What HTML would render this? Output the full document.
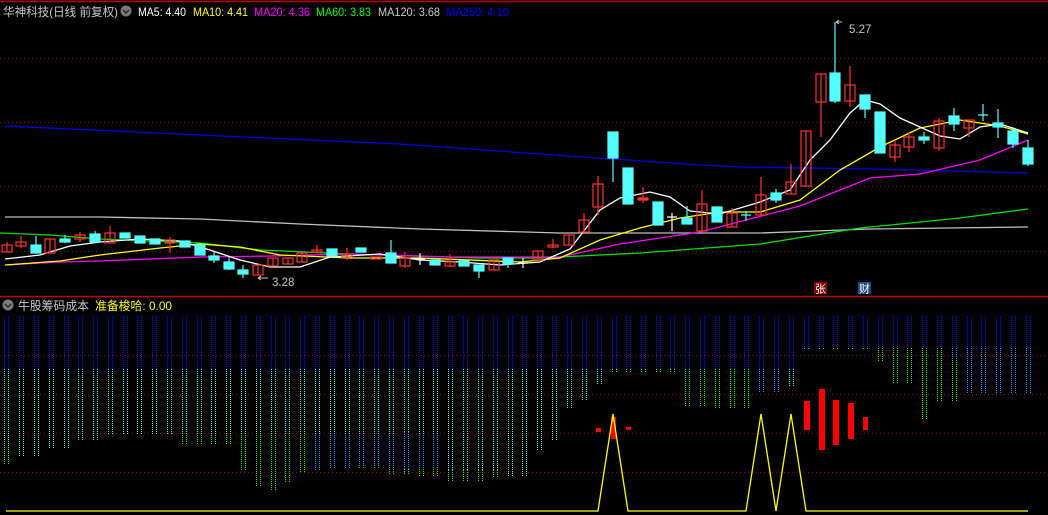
<!DOCTYPE html>
<html><head><meta charset="utf-8"><style>
html,body{margin:0;padding:0;background:#000;width:1048px;height:515px;overflow:hidden}
svg{display:block}
text{font-family:"Liberation Sans","Noto Sans CJK SC",sans-serif}
</style></head><body>
<svg width="1048" height="515" viewBox="0 0 1048 515" xmlns="http://www.w3.org/2000/svg">
<rect width="1048" height="515" fill="#000"/>
<line x1="0" y1="1.5" x2="1048" y2="1.5" stroke="#c00000" stroke-width="1.5"/>
<g stroke="#9a0000" stroke-dasharray="1 3" stroke-width="1" shape-rendering="crispEdges">
<line x1="0" y1="58.5" x2="1048" y2="58.5"/><line x1="0" y1="122.5" x2="1048" y2="122.5"/>
<line x1="0" y1="186.5" x2="1048" y2="186.5"/><line x1="0" y1="251.5" x2="1048" y2="251.5"/>
<line x1="0" y1="355.5" x2="1048" y2="355.5"/><line x1="0" y1="394.5" x2="1048" y2="394.5"/>
<line x1="0" y1="433.5" x2="1048" y2="433.5"/><line x1="0" y1="472.5" x2="1048" y2="472.5"/>
</g>
<line x1="0" y1="296.5" x2="1048" y2="296.5" stroke="#c00000" stroke-width="1.5"/>

<text x="3" y="16" font-size="12" fill="#c8c8c8" textLength="115" lengthAdjust="spacingAndGlyphs">华神科技(日线 前复权)</text>
<circle cx="126" cy="11" r="5.5" fill="#7a7a7a"/><path d="M123 10l3 3 3-3" stroke="#222" stroke-width="1.3" fill="none"/>
<text x="138" y="16" font-size="12" fill="#fff" textLength="48" lengthAdjust="spacingAndGlyphs">MA5: 4.40</text>
<text x="193" y="16" font-size="12" fill="#ffff00" textLength="55" lengthAdjust="spacingAndGlyphs">MA10: 4.41</text>
<text x="254" y="16" font-size="12" fill="#ff00ff" textLength="56" lengthAdjust="spacingAndGlyphs">MA20: 4.36</text>
<text x="316" y="16" font-size="12" fill="#00ff00" textLength="55" lengthAdjust="spacingAndGlyphs">MA60: 3.83</text>
<text x="378" y="16" font-size="12" fill="#c8c8c8" textLength="62" lengthAdjust="spacingAndGlyphs">MA120: 3.68</text>
<text x="446" y="16" font-size="12" fill="#0000ff" textLength="63" lengthAdjust="spacingAndGlyphs">MA250: 4.10</text>

<g fill="none" stroke-width="1.3">
<polyline stroke="#0000e0" points="5,126 200,135 400,144 540,154 700,165 740,167 873,169 1028,173"/>
<polyline stroke="#c0c0c0" points="5,217 100,217 200,219 300,224 420,229 560,233 760,233 870,229 1028,227"/>
<polyline stroke="#00e000" points="0,233 50,235 100,239 200,243 260,250 350,254 480,258 540,258 640,253 760,244 860,228 960,218 1028,209"/>
<polyline stroke="#ff00ff" points="5,265 60,262 100,261 200,257 270,256 350,254 450,257 560,257 620,244 700,232 800,206 870,178 920,174 980,160 1028,140"/>
<polyline stroke="#ffff00" points="5,265 60,261 100,255 160,248 200,244 240,247 280,255 350,258 420,258 520,262 560,258 600,240 640,228 680,218 720,212 760,212 800,200 840,170 880,147 920,128 960,120 1000,126 1028,134"/>
<polyline stroke="#ffffff" points="5,259 40,255 70,246 100,242 140,239 180,241 210,250 240,260 270,267 300,267 330,257 380,254 420,260 460,262 500,265 540,262 570,249 600,210 620,198 650,192 670,197 690,211 720,214 760,202 790,190 810,160 830,140 850,113 865,100 880,104 900,118 920,127 940,136 960,139 980,127 1000,124 1028,133"/>
</g>

<g stroke="#ff3232" fill="none" stroke-width="1.2">
<path d="M7 242V252M21 236V248M50 239V253M80 232V242M110 226V243M170 237V253M258 265V275M273 258V266M288 258V264M302 253V262M317 245V252M347 248V260M376 257V259M405 252V268M450 254V267M494 260V270M538 251V260M553 239V248M569 235V245M584 213V232M598 176V215M643 187V203M702 190V231M732 208V227M761 177V215M791 164V194M806 131V186M821 74V137M850 66V107M895 140V162M909 132V152M939 118V151M969 120V137"/>
<rect x="2" y="245" width="10" height="7"/><rect x="16" y="242" width="10" height="4"/><rect x="45" y="239" width="10" height="14"/>
<rect x="75" y="235" width="10" height="4"/><rect x="105" y="233" width="10" height="10"/><rect x="165" y="240" width="10" height="3"/>
<rect x="253" y="265" width="10" height="10"/><rect x="268" y="258" width="10" height="8"/><rect x="283" y="258" width="10" height="6"/>
<rect x="297" y="253" width="10" height="9"/><rect x="312" y="250" width="10" height="2"/><rect x="342" y="254" width="10" height="3"/>
<rect x="371" y="257" width="10" height="2"/><rect x="400" y="258" width="10" height="8"/><rect x="445" y="262" width="10" height="4"/>
<rect x="489" y="260" width="10" height="10"/><rect x="533" y="251" width="10" height="9"/><rect x="548" y="245" width="10" height="2"/>
<rect x="564" y="235" width="10" height="10"/><rect x="579" y="220" width="10" height="12"/><rect x="593" y="184" width="10" height="23"/>
<rect x="638" y="198" width="10" height="2" fill="#ff3232"/><rect x="697" y="204" width="10" height="27"/><rect x="727" y="213" width="10" height="14"/>
<rect x="756" y="195" width="10" height="20"/><rect x="786" y="182" width="10" height="12"/><rect x="801" y="131" width="10" height="55"/>
<rect x="816" y="74" width="10" height="28"/><rect x="845" y="85" width="10" height="16"/><rect x="890" y="145" width="10" height="12"/>
<rect x="904" y="137" width="10" height="10"/><rect x="934" y="121" width="10" height="27"/><rect x="964" y="120" width="10" height="8"/>
</g>
<g stroke="#54ffff" fill="#54ffff" stroke-width="1.2">
<path d="M36 236V254M65 235V243M95 231V242M214 252V263M229 257V270M243 265V278M391 240V263M479 265V278M508 258V268M613 132V182M687 206V224M776 189V203M835 22V103M865 95V118M924 132V144M954 108V131M998 109V138M1013 127V148M1028 140V166M746 211V221M983 104V121" fill="none"/>
<rect x="31" y="245" width="10" height="8"/><rect x="60" y="239" width="10" height="3"/><rect x="90" y="234" width="10" height="8"/>
<rect x="120" y="233" width="10" height="5"/><rect x="135" y="236" width="10" height="7"/><rect x="150" y="239" width="10" height="5"/>
<rect x="180" y="241" width="10" height="6"/><rect x="195" y="245" width="10" height="10"/><rect x="209" y="256" width="10" height="4"/>
<rect x="224" y="262" width="10" height="7"/><rect x="238" y="270" width="10" height="4"/><rect x="327" y="249" width="10" height="7"/>
<rect x="356" y="248" width="10" height="4"/><rect x="386" y="253" width="10" height="10"/><rect x="430" y="260" width="10" height="5"/>
<rect x="459" y="261" width="10" height="5"/><rect x="474" y="265" width="10" height="6"/><rect x="503" y="258" width="10" height="6"/>
<rect x="608" y="132" width="10" height="26"/><rect x="623" y="168" width="10" height="36"/><rect x="653" y="202" width="10" height="23"/>
<rect x="682" y="218" width="10" height="6"/><rect x="712" y="207" width="10" height="15"/><rect x="771" y="193" width="10" height="7"/>
<rect x="830" y="73" width="10" height="28"/><rect x="860" y="95" width="10" height="14"/><rect x="875" y="112" width="10" height="41"/>
<rect x="919" y="137" width="10" height="3"/><rect x="949" y="116" width="10" height="8"/><rect x="993" y="123" width="10" height="4"/>
<rect x="1008" y="131" width="10" height="13"/><rect x="1023" y="148" width="10" height="16"/>
<path d="M741 215H751M978 115H988" fill="none"/>
</g>
<g stroke="#fff" stroke-width="1.2" fill="none">
<path d="M415 259H425M420 253V265M667 217H677M672 213V231M518 263H528M523 258V268"/>
</g>

<path d="M836 22H842M836 22l3 -2M836 22l3 2" stroke="#c8c8c8" fill="none"/>
<text x="849" y="33" font-size="11.5" fill="#c8c8c8">5.27</text>
<path d="M258 278H268M258 278l3 -2M258 278l3 2" stroke="#c8c8c8" fill="none"/>
<text x="272" y="286" font-size="11.5" fill="#c8c8c8">3.28</text>

<rect x="814" y="282" width="13" height="12" fill="#8b0000"/>
<text x="820.5" y="292.5" font-size="11" fill="#fff" text-anchor="middle">张</text>
<rect x="858" y="282" width="13" height="12" fill="#1a4a8a"/>
<text x="864.5" y="292.5" font-size="11" fill="#fff" text-anchor="middle">财</text>

<circle cx="8" cy="305" r="5.5" fill="#7a7a7a"/><path d="M5 304l3 3 3-3" stroke="#222" stroke-width="1.3" fill="none"/>
<text x="18" y="310" font-size="12" fill="#c8c8c8" textLength="71" lengthAdjust="spacingAndGlyphs">牛股筹码成本</text>
<text x="95" y="310" font-size="12" fill="#ffff00" textLength="77" lengthAdjust="spacingAndGlyphs">准备梭哈: 0.00</text>

<g stroke-width="1" stroke-dasharray="1 1" fill="none" shape-rendering="crispEdges" transform="translate(0.5,0)">
<path stroke="#0010ff" d="M4 316V369M8 316V369M19 316V369M23 316V369M34 316V369M38 316V369M49 316V369M53 316V369M64 316V369M68 316V369M78 316V369M82 316V369M93 316V369M97 316V369M108 316V369M112 316V369M123 316V369M127 316V369M137 316V369M141 316V369M152 316V369M156 316V369M167 316V369M171 316V369M182 316V369M186 316V369M197 316V369M201 316V369M211 316V369M215 316V369M226 316V369M230 316V369M241 316V369M245 316V369M256 316V369M260 316V369M271 316V369M275 316V369M285 316V369M289 316V369M300 316V369M304 316V369M315 316V369M319 316V369M330 316V369M334 316V369M345 316V369M349 316V369M359 316V369M363 316V369M374 316V369M378 316V369M389 316V369M393 316V369M404 316V369M408 316V369M419 316V369M423 316V369M433 316V369M437 316V369M448 316V369M452 316V369M463 316V369M467 316V369M478 316V369M482 316V369M493 316V369M497 316V369M508 316V369M512 316V369M522 316V369M526 316V369M537 316V369M541 316V369M552 316V369M556 316V369M567 316V369M571 316V369M582 316V369M586 316V369M597 316V369M601 316V369M612 316V369M616 316V369M626 316V369M630 316V369M641 316V369M645 316V369M656 316V369M660 316V369M670 316V369M674 316V369M685 316V369M689 316V369M700 316V369M704 316V369M715 316V369M719 316V369M730 316V369M734 316V369M744 316V369M748 316V369M759 316V369M763 316V369M774 316V369M778 316V369M789 316V369M793 316V369M804 316V348M808 316V348M819 316V348M823 316V348M833 316V348M837 316V348M848 316V348M852 316V348M863 316V348M867 316V348M878 316V348M882 316V348M893 316V348M897 316V348M907 316V348M911 316V348M922 316V348M926 316V348M937 316V348M941 316V348M952 316V348M956 316V348M967 316V348M971 316V348M981 316V348M985 316V348M996 316V348M1000 316V348M1011 316V348M1015 316V348M1026 316V348M1030 316V348"/>
<path stroke="#40ffff" d="M4 369V462M8 369V462M19 369V457M23 369V457M34 369V457M38 369V457M49 369V449M53 369V449M64 369V449M68 369V449M78 369V440M82 369V440M93 369V440M97 369V440M108 369V435M112 369V435M123 369V435M127 369V435M137 369V435M141 369V435M152 369V435M156 369V435M167 369V435M171 369V435M182 369V435M186 369V435M197 369V435M201 369V435M211 369V435M215 369V435M226 369V435M230 369V435M241 369V435M245 369V435M256 369V435M260 369V435M271 369V435M275 369V435M285 369V435M289 369V435M300 369V435M304 369V435M315 369V435M319 369V435M330 369V435M334 369V435M345 369V435M349 369V435M359 369V435M363 369V435M374 369V435M378 369V435M389 369V435M393 369V435M404 369V432M408 369V432M419 369V435M423 369V435M433 369V435M437 369V435M448 369V470M452 369V470M463 369V470M467 369V470M478 369V470M482 369V470M493 369V470M497 369V470M508 369V477M512 369V477M522 369V477M526 369V477M537 369V451M541 369V451M552 369V441M556 369V441M567 369V408M571 369V408M582 369V401M586 369V401M597 369V384M601 369V384M789 369V387M793 369V387"/>
<path stroke="#1e90ff" d="M315 435V470M319 435V470M330 435V469M334 435V469M345 435V469M349 435V469M359 435V469M363 435V469M374 435V469M378 435V469M389 435V469M393 435V469M404 432V469M408 432V469M419 435V469M423 435V469M433 435V469M437 435V469M759 369V393M763 369V393M774 369V393M778 369V393M952 348V360M956 348V360M967 348V393M971 348V393M981 348V393M985 348V393M996 348V393M1000 348V393M1011 348V393M1015 348V393M1026 348V393M1030 348V393"/>
<path stroke="#00ff00" d="M4 461V465M8 461V465M182 435V445M186 435V445M197 435V445M201 435V445M211 435V445M215 435V445M226 435V445M230 435V445M241 435V470M245 435V470M256 435V487M260 435V487M271 435V490M275 435V490M285 435V483M289 435V483M300 435V473M304 435V473M389 469V475M393 469V475M404 469V475M408 469V475M419 469V477M423 469V477M433 469V477M437 469V477M448 470V481M452 470V481M463 470V481M467 470V481M478 470V481M482 470V481M493 470V478M497 470V478M612 369V373M616 369V373M626 369V373M630 369V373M641 369V373M645 369V373M656 369V373M660 369V373M670 369V373M674 369V373M685 369V406M689 369V406M700 369V406M704 369V406M715 369V409M719 369V409M730 369V409M734 369V409M744 369V409M748 369V409M804 348V350M808 348V350M819 348V350M823 348V350M833 348V350M837 348V350M848 348V350M852 348V350M863 348V350M867 348V350M878 348V361M882 348V361M893 348V384M897 348V384M907 348V384M911 348V384M922 348V419M926 348V419M937 348V401M941 348V401M952 360V401M956 360V401"/>
</g>

<g fill="#ff0000">
<rect x="804" y="401" width="6" height="29"/><rect x="819" y="389" width="6" height="61"/>
<rect x="833" y="400" width="6" height="45"/><rect x="848" y="403" width="6" height="36"/>
<rect x="863" y="417" width="5" height="13"/>
<rect x="596" y="428" width="5" height="4"/><rect x="611" y="417" width="5" height="22"/><rect x="626" y="427" width="5" height="3"/>
</g>
<polyline fill="none" stroke="#ffff00" stroke-width="1.3" points="6,511 598,511 613,414 628,511 746,511 761,414 776,511 791,414 806,511 1028,511"/>
</svg>
</body></html>
